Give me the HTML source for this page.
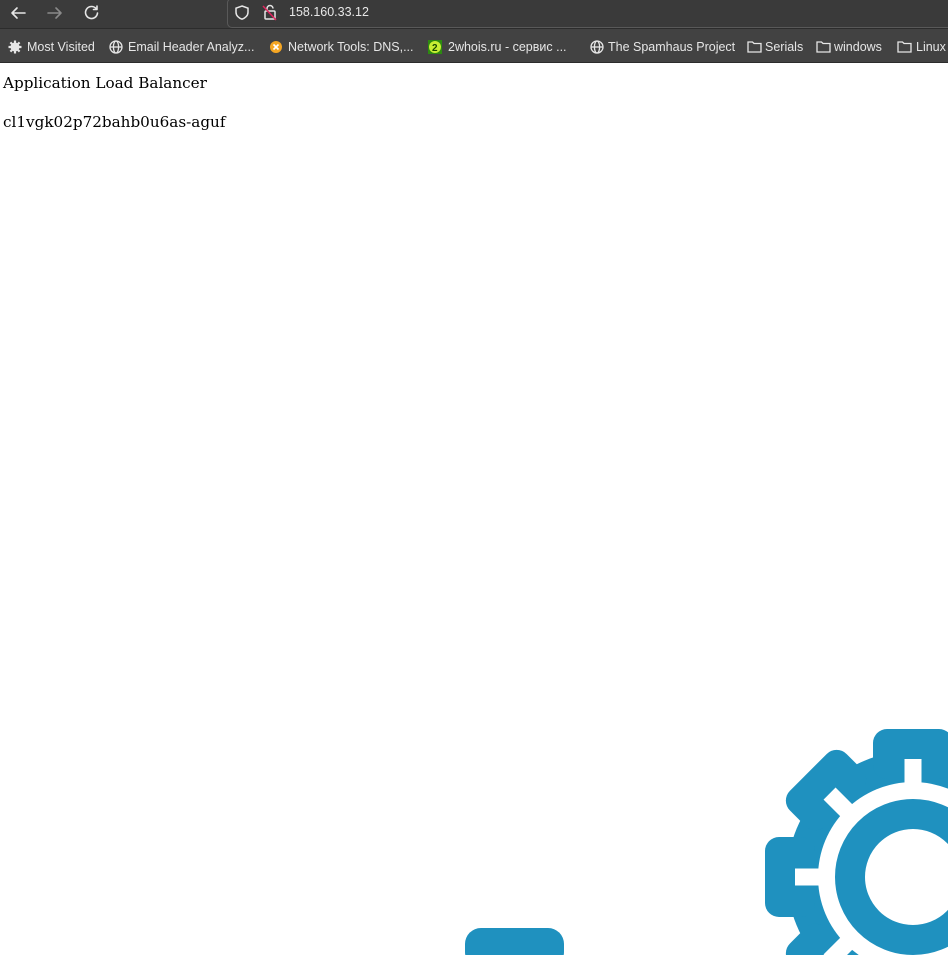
<!DOCTYPE html>
<html><head><meta charset="utf-8"><style>
*{margin:0;padding:0;box-sizing:border-box}
html{overflow:hidden}
body{width:948px;height:955px;overflow:hidden;background:#fff;position:relative;font-family:"Liberation Sans","DejaVu Sans",sans-serif}
#top{position:absolute;left:0;top:0;width:948px;height:28px;background:#3b3b3b}
#url{position:absolute;left:227px;top:-2px;width:730px;height:30px;background:#3a3a3a;border:1px solid #595959;border-radius:5px}
#url span{position:absolute;left:61px;top:6px;color:#e8e8e8;font-size:12.5px}
#bm{position:absolute;left:0;top:28px;width:948px;height:35px;background:#424242;border-top:1px solid #2c2c2c;border-bottom:1px solid #2c2c2c}
.b{position:absolute;top:11px;color:#e6e6e6;font-size:12.5px;white-space:nowrap}
.t{position:absolute;left:3px;font-family:"DejaVu Serif","Liberation Serif",serif;font-size:15.2px;color:#000}
</style></head><body>
<div id="top">
<svg width="110" height="28" style="position:absolute;left:0;top:0" fill="none" stroke-width="1.6" stroke-linecap="round" stroke-linejoin="round">
<path d="M12 13h13M17 8l-5 5 5 5" stroke="#e6e6e6"/>
<path d="M48 13h13M56 8l5 5-5 5" stroke="#8a8a8a"/>
<path d="M96 8.5a6 6 0 1 0 1.5 4.5M97 6v3.5h-3.5" stroke="#e6e6e6"/>
</svg>
<div id="url">
<svg width="60" height="28" style="position:absolute;left:0;top:0" fill="none" stroke-width="1.5">
<path d="M14 7l6 2.2v4c0 3.5-3 6-6 7-3-1-6-3.5-6-7v-4z" stroke="#e6e6e6"/>
<rect x="37" y="12" width="10" height="8" rx="1" stroke="#e6e6e6"/>
<path d="M39 12v-2.5a3 3 0 0 1 6 0" stroke="#e6e6e6"/>
<path d="M35 7l13 14" stroke="#e0245e"/>
</svg>
<span>158.160.33.12</span></div>
</div>
<div id="bm">
<svg width="948" height="34" style="position:absolute;left:0;top:0" fill="none" stroke="#e6e6e6" stroke-width="1.3">
<circle cx="15" cy="18" r="4.5" fill="#e6e6e6" stroke="none"/><circle cx="15" cy="18" r="2" fill="#424242" stroke="none"/>
<path d="M15 11.5v13M8.5 18h13M10.4 13.4l9.2 9.2M19.6 13.4l-9.2 9.2" stroke-width="2.2"/>
<circle cx="116" cy="18" r="6"/><ellipse cx="116" cy="18" rx="2.6" ry="6"/><path d="M110 18h12"/>
<circle cx="276" cy="18" r="6" fill="#f5a623" stroke="none"/><path d="M273.5 15.5l5 5M278.5 15.5l-5 5" stroke="#fff" stroke-width="1.6"/>
<rect x="428" y="11" width="14" height="14" fill="#2d8a10" stroke="none"/><circle cx="435" cy="18" r="6" fill="#c8ee33" stroke="none"/>
<text x="432" y="22" font-size="10" font-weight="bold" fill="#1a4a00" stroke="none" font-family="Liberation Sans">2</text>
<circle cx="597" cy="18" r="6"/><ellipse cx="597" cy="18" rx="2.6" ry="6"/><path d="M591 18h12"/>
<path d="M748 13h4.5l1.5 1.5h7v8.5h-13z"/>
<path d="M817 13h4.5l1.5 1.5h7v8.5h-13z"/>
<path d="M898 13h4.5l1.5 1.5h7v8.5h-13z"/>
</svg>
<span class="b" style="left:27px">Most Visited</span>
<span class="b" style="left:128px">Email Header Analyz...</span>
<span class="b" style="left:288px">Network Tools: DNS,...</span>
<span class="b" style="left:448px">2whois.ru - сервис ...</span>
<span class="b" style="left:608px">The Spamhaus Project</span>
<span class="b" style="left:765px">Serials</span>
<span class="b" style="left:834px">windows</span>
<span class="b" style="left:916px">Linux</span>
</div>
<div class="t" style="top:74px">Application Load Balancer</div>
<div class="t" style="top:113px">cl1vgk02p72bahb0u6as-aguf</div>
<svg width="948" height="955" style="position:absolute;left:0;top:0">
<rect x="465" y="928" width="99" height="40" rx="16" fill="#1f91bf"/>
<g transform="translate(913 877)">
<g fill="#1f91bf">
<circle r="126"/>
<g id="tb"><rect x="-40" y="-148" width="80" height="50" rx="14"/></g>
<use href="#tb" transform="rotate(45)"/><use href="#tb" transform="rotate(90)"/><use href="#tb" transform="rotate(135)"/>
<use href="#tb" transform="rotate(180)"/><use href="#tb" transform="rotate(225)"/><use href="#tb" transform="rotate(270)"/><use href="#tb" transform="rotate(315)"/>
</g>
<g fill="#fff">
<circle r="95"/>
<g id="tw"><rect x="-8.5" y="-118" width="17" height="30"/></g>
<use href="#tw" transform="rotate(45)"/><use href="#tw" transform="rotate(90)"/><use href="#tw" transform="rotate(135)"/>
<use href="#tw" transform="rotate(180)"/><use href="#tw" transform="rotate(225)"/><use href="#tw" transform="rotate(270)"/><use href="#tw" transform="rotate(315)"/>
</g>
<circle r="63" fill="none" stroke="#1f91bf" stroke-width="30"/>
</g>
</svg>
</body></html>
